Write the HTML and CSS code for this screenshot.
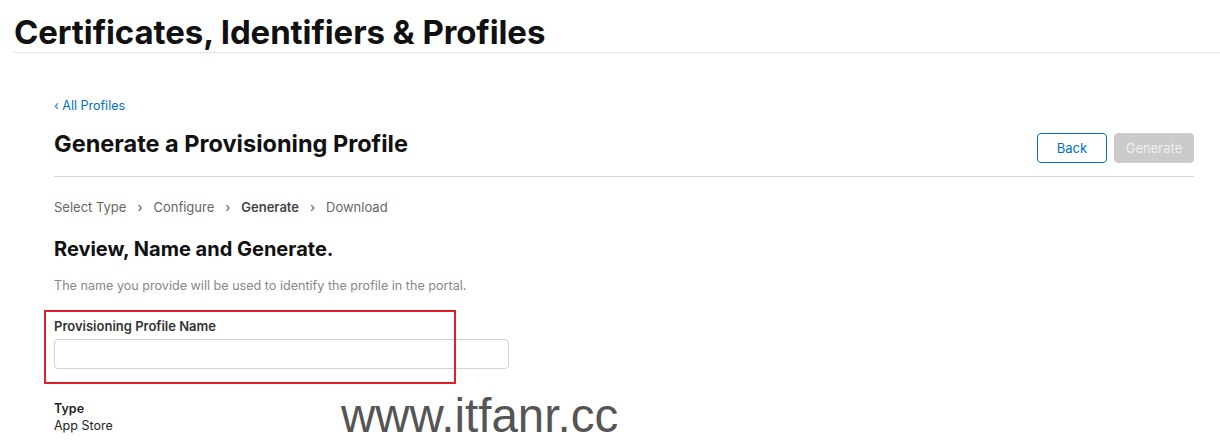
FILE: index.html
```html
<!DOCTYPE html>
<html>
<head>
<meta charset="utf-8">
<link rel="stylesheet" href="styles.css">
</head>
<body>
<header class="top">
  <h1 class="top-title">Certificates, Identifiers &amp; Profiles</h1>
</header>
<main class="main">
  <a class="back-link" href="#">‹ All Profiles</a>
  <div class="head-row">
    <h2 class="page-title">Generate a Provisioning Profile</h2>
    <div class="actions">
      <button class="btn btn-back">Back</button>
      <button class="btn btn-gen">Generate</button>
    </div>
  </div>
  <nav class="steps">
    <span>Select Type</span><span class="sep">›</span>
    <span>Configure</span><span class="sep">›</span>
    <span class="current">Generate</span><span class="sep">›</span>
    <span>Download</span>
  </nav>
  <h3 class="section-title">Review, Name and Generate.</h3>
  <p class="desc">The name you provide will be used to identify the profile in the portal.</p>
  <div class="field">
    <label class="field-label">Provisioning Profile Name</label>
    <input class="field-input" type="text">
    <div class="highlight"></div>
  </div>
  <div class="info">
    <div class="info-label">Type</div>
    <div class="info-value">App Store</div>
  </div>
</main>
<div class="watermark">www.itfanr.cc</div>
</body>
</html>
```
FILE: styles.css
```css
* { box-sizing: border-box; }
html, body { margin: 0; padding: 0; background: #fff; }
body {
  font-family: Inter, "Noto Sans", sans-serif;
  color: #111;
  width: 1220px;
  height: 447px;
  overflow: hidden;
  position: relative;
}
.top {
  margin-left: 13px;
  border-bottom: 1px solid #e2e2e2;
  height: 53px;
  padding-top: 12px;
}
.top-title {
  margin: 0 0 0 1px;
  font-size: 33px;
  font-weight: 700;
  letter-spacing: -0.1px;
  line-height: 40px;
}
.main {
  margin: 0 26px 0 54px;
  padding-top: 45px;
}
.back-link {
  display: block;
  font-size: 12.5px;
  color: #0070c9;
  text-decoration: none;
  line-height: 16px;
}
.head-row {
  display: flex;
  justify-content: space-between;
  align-items: flex-end;
  border-bottom: 1px solid #d6d6d6;
  padding: 15px 0 13px;
}
.page-title {
  margin: 0 0 4px;
  font-size: 23.5px;
  font-weight: 700;
  line-height: 30px;
}
.actions { display: flex; gap: 7px; }
.btn {
  font-family: Inter, "Noto Sans", sans-serif;
  font-size: 13px;
  height: 30px;
  border-radius: 4px;
  padding: 0;
}
.btn-back {
  width: 70px;
  background: #fff;
  border: 1px solid #0070c9;
  color: #0070c9;
}
.btn-gen {
  width: 80px;
  background: #cbcbcb;
  border: 1px solid #cbcbcb;
  color: #eeeeee;
}
.steps {
  display: flex;
  gap: 11px;
  font-size: 13px;
  color: #666;
  margin-top: 21px;
  line-height: 18px;
}
.steps .current { color: #444; font-weight: 600; }
.steps .sep { color: #555; }
.section-title {
  margin: 20px 0 0;
  font-size: 20px;
  font-weight: 700;
  line-height: 26px;
}
.desc {
  margin: 16px 0 0;
  font-size: 12.6px;
  color: #888;
  line-height: 16px;
}
.field {
  position: relative;
  margin-top: 24px;
  width: 455px;
}
.field-label {
  display: block;
  font-size: 13px;
  font-weight: 600;
  color: #333;
  line-height: 16px;
}
.field-input {
  display: block;
  width: 455px;
  height: 30px;
  margin-top: 5px;
  border: 1px solid #d2d2d2;
  border-radius: 4px;
  background: #fff;
}
.highlight {
  position: absolute;
  left: -10px;
  top: -8px;
  width: 412px;
  height: 74px;
  border: 2px solid #e02027;
  pointer-events: none;
}
.info { margin-top: 31px; }
.info-label {
  font-size: 12.5px;
  font-weight: 600;
  color: #222;
  line-height: 17px;
}
.info-value {
  font-size: 12.5px;
  color: #222;
  line-height: 17px;
}
.watermark {
  position: absolute;
  left: 341px;
  top: 389px;
  font-family: "Liberation Sans", Arial, sans-serif;
  font-size: 47.5px;
  color: #555;
  line-height: 54px;
}
```
